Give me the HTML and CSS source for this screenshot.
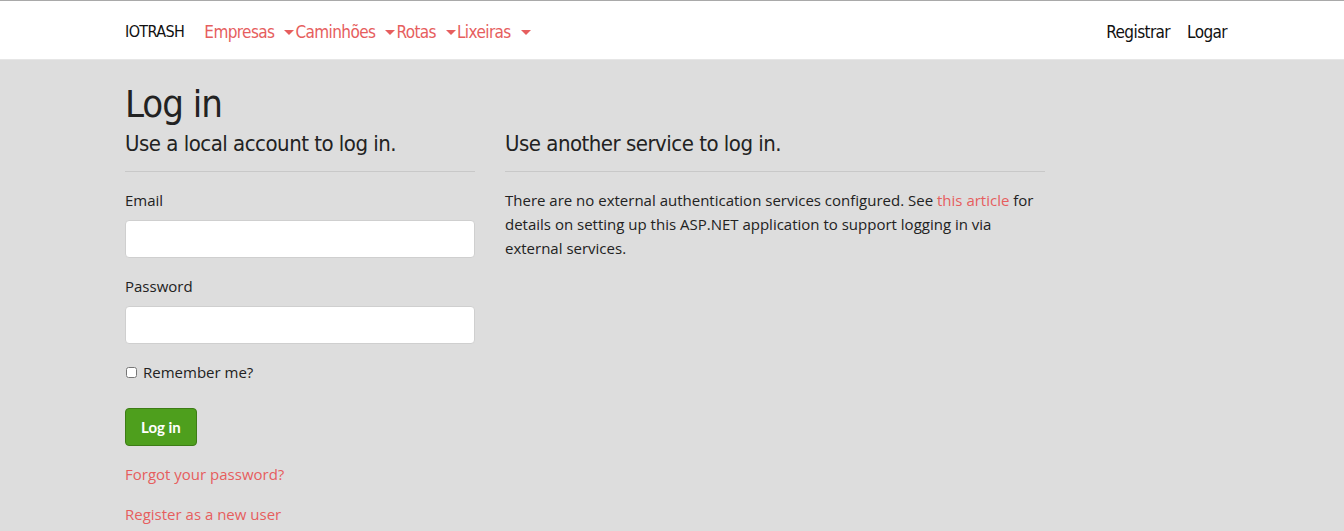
FILE: index.html
```html
<!DOCTYPE html>
<html lang="pt">
<head>
<meta charset="utf-8">
<title>Log in - IOTRASH</title>
<link rel="stylesheet" href="styles.css">
</head>
<body>
<header class="navbar">
  <div class="nav-inner">
    <div class="nav-left">
      <a class="brand" href="#">IOTRASH</a>
      <ul class="menu">
        <li><a class="menu-link" href="#">Empresas<span class="caret"></span></a></li>
        <li><a class="menu-link" href="#">Caminhões<span class="caret"></span></a></li>
        <li><a class="menu-link" href="#">Rotas<span class="caret"></span></a></li>
        <li><a class="menu-link" href="#">Lixeiras<span class="caret wide"></span></a></li>
      </ul>
    </div>
    <ul class="menu-right">
      <li><a class="user-link" href="#">Registrar</a></li>
      <li><a class="user-link" href="#">Logar</a></li>
    </ul>
  </div>
</header>
<main class="container">
  <h1 class="title">Log in</h1>
  <div class="row">
    <section class="col-left">
      <h4 class="subtitle">Use a local account to log in.</h4>
      <hr class="rule">
      <form class="form">
        <div class="field">
          <label class="label" for="email">Email</label>
          <input class="input" id="email" type="email">
        </div>
        <div class="field">
          <label class="label" for="pw">Password</label>
          <input class="input" id="pw" type="password">
        </div>
        <div class="check">
          <input class="checkbox" id="rem" type="checkbox">
          <label class="check-label" for="rem">Remember me?</label>
        </div>
        <button class="btn" type="button">Log in</button>
        <p class="link-p"><a class="link" href="#">Forgot your password?</a></p>
        <p class="link-p"><a class="link" href="#">Register as a new user</a></p>
      </form>
    </section>
    <section class="col-right">
      <h4 class="subtitle">Use another service to log in.</h4>
      <hr class="rule">
      <p class="text">There are no external authentication services configured. See <a class="link" href="#">this article</a> for details on setting up this ASP.NET application to support logging in via external services.</p>
    </section>
  </div>
</main>
</body>
</html>
```
FILE: styles.css
```css
* { box-sizing: border-box; }
html, body { margin: 0; padding: 0; }
body {
  background: #dddddd;
  color: #222222;
  font-family: "Open Sans", "Noto Sans", sans-serif;
  font-size: 15px;
  line-height: 24px;
  border-top: 1px solid #a9a9a9;
  overflow: hidden;
}
a { text-decoration: none; }
.navbar {
  background: #ffffff;
  height: 59px;
  border-bottom: 1px solid #e6e6e6;
}
.nav-inner {
  width: 1102px;
  margin: 0 0 0 125px;
  height: 58px;
  padding-top: 4px;
  display: flex;
  align-items: center;
  justify-content: space-between;
  font-family: "DejaVu Sans Condensed", "DejaVu Sans", sans-serif;
  font-size: 17px;
  letter-spacing: -0.6px;
}
.nav-left { display: flex; align-items: center; }
.brand { color: #111; font-size: 16px; letter-spacing: -0.6px; margin-right: 20px; }
.menu, .menu-right { list-style: none; margin: 0; padding: 0; display: flex; align-items: center; }
.menu-link { color: #e65e5e; display: flex; align-items: center; }
.caret {
  display: inline-block;
  width: 0; height: 0;
  margin-left: 10px;
  margin-right: 1px;
  border-top: 5px solid #e65e5e;
  border-left: 5px solid transparent;
  border-right: 5px solid transparent;
}
.caret.wide { margin-left: 10px; }
.user-link { color: #111; margin-left: 17px; }
.container { width: 1140px; margin-left: 110px; padding: 0 15px; }
.title {
  font-family: "DejaVu Sans Condensed", "DejaVu Sans", sans-serif;
  font-weight: 400;
  font-size: 38px;
  letter-spacing: -1px;
  line-height: 48px;
  margin: 20px 0 0;
}
.row { display: flex; margin: 0 -15px; }
.col-left { width: 380px; padding: 0 15px; }
.col-right { width: 570px; padding: 0 15px; }
.subtitle {
  font-family: "DejaVu Sans Condensed", "DejaVu Sans", sans-serif;
  font-weight: 400;
  font-size: 22px;
  letter-spacing: -0.5px;
  line-height: 30px;
  margin: 0;
  padding-top: 1px;
}
.rule { border: 0; border-top: 1px solid #c8c8c8; margin: 12px 0 16px; }
.field { margin-bottom: 16px; }
.label { display: block; margin-bottom: 8px; }
.input {
  display: block;
  width: 100%;
  height: 38px;
  border: 1px solid #cfcfcf;
  border-radius: 4px;
  background: #fff;
  padding: 6px 12px;
}
.check { display: flex; align-items: center; margin-bottom: 24px; }
.checkbox { width: 11px; height: 11px; margin: 0 6px 0 1px; }
.check-label { color: #222; }
.btn {
  background: #4e9f1d;
  border: 1px solid #3d7c16;
  color: #fff;
  border-radius: 4px;
  font-family: Lato, sans-serif;
  font-weight: 700;
  font-size: 15px;
  height: 38px;
  padding: 0 15px;
  display: block;
  margin-bottom: 16px;
}
.link-p { margin: 0 0 16px; }
.link { color: #e65e5e; }
.text { margin: 0; }
```
